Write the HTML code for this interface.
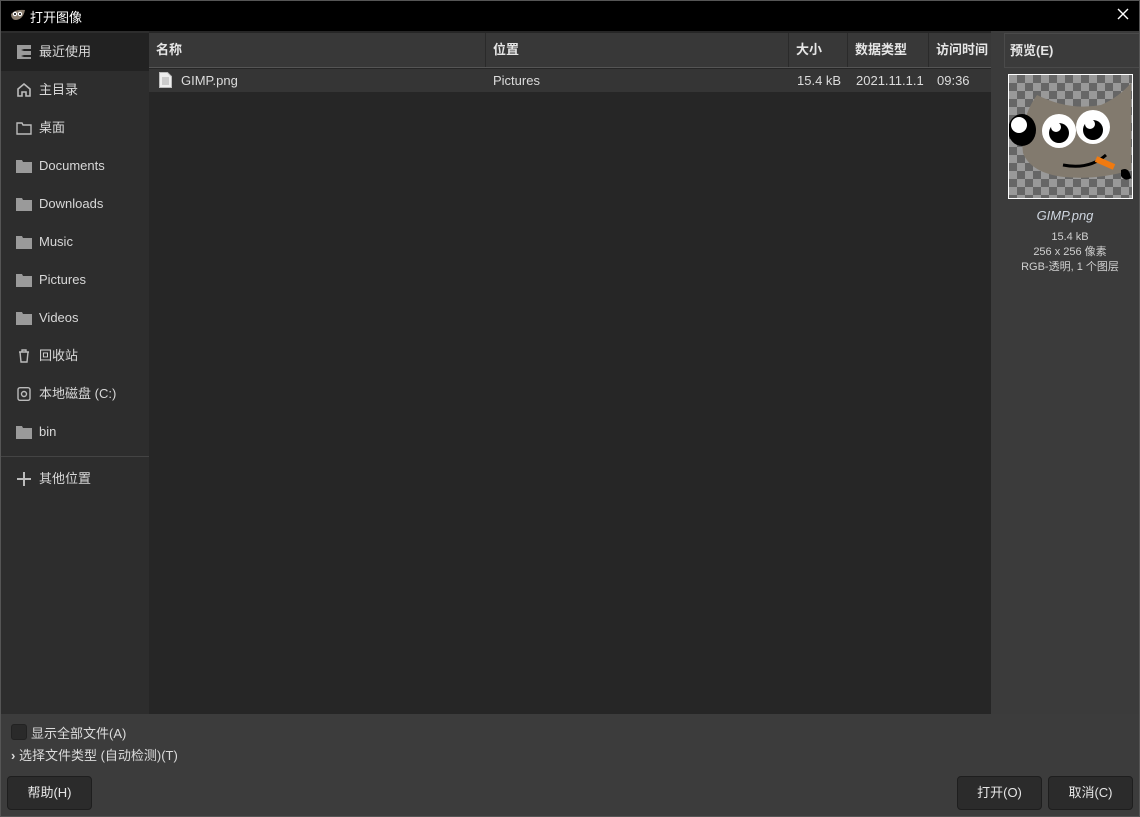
<!DOCTYPE html>
<html><head><meta charset="utf-8"><style>
*{margin:0;padding:0;box-sizing:border-box}
body{width:1140px;height:817px;background:#3c3c3c;font-family:"Liberation Sans","Noto Sans CJK SC",sans-serif;font-size:13px;color:#dcdcdc;position:relative;overflow:hidden}
.abs{position:absolute}
#frame{left:0;top:0;width:1140px;height:817px;border:1px solid #555}
#title{left:0;top:0;width:1140px;height:31px;background:#000;color:#fff;font-size:13px}
#side{left:1px;top:31px;width:148px;height:683px;background:#2d2d2d}
.it{position:absolute;left:0;width:148px;height:38px;line-height:38px;padding-left:38px;color:#d8d8d8}
.ic{position:absolute;left:15px;top:12px;width:16px;height:14px}
#main{left:149px;top:31px;width:842px;height:683px;background:#262626}
#hdr{left:149px;top:33px;width:842px;height:35px;background:#383838;border-bottom:1px solid #555}
.h{position:absolute;top:0;height:34px;line-height:34px;font-weight:bold;color:#e6e6e6;padding-left:7px;border-right:1px solid #2a2a2a}
#row{left:149px;top:69px;width:842px;height:23px;background:#353535}
.c{position:absolute;top:0;line-height:23px;color:#dcdcdc}
#prev{left:991px;top:31px;width:148px;height:683px;background:#3b3b3b}
#bottom{left:1px;top:714px;width:1138px;height:102px;background:#3c3c3c}
.btn{position:absolute;height:34px;border:1px solid #1e1e1e;border-radius:4px;background:#2b2b2b;color:#e6e6e6;text-align:center;line-height:32px}
</style></head><body>
<div class="abs" id="title">
 <svg class="abs" style="left:9px;top:8px" width="18" height="14" viewBox="0 0 18 14"><path d="M2 6 Q6 1 16 2 Q14 12 6 12 Q2 11 2 6Z" fill="#8a7d6e"/><circle cx="6" cy="6" r="2.2" fill="#fff"/><circle cx="11" cy="6" r="2.2" fill="#fff"/><circle cx="6" cy="6" r="1" fill="#000"/><circle cx="11" cy="6" r="1" fill="#000"/></svg>
 <div class="abs" style="left:30px;top:7px">打开图像</div>
 <svg class="abs" style="left:1117px;top:8px" width="12" height="12" viewBox="0 0 12 12"><path d="M1 1L11 11M11 1L1 11" stroke="#fff" stroke-width="1.4"/></svg>
</div>
<div class="abs" id="side">
 <div class="it" style="top:2px;background:#222">最近使用<svg class="ic" viewBox="0 0 16 14"><path d="M1 0h14v4H5l3 1-3 1h10v4H5l3 1-3 1h10v2H1z" fill="#9a9a9a"/></svg></div>
 <div class="it" style="top:40px">主目录<svg class="ic" viewBox="0 0 16 14"><path d="M2 13V6l6-5 6 5v7H10V9H6v4z" fill="none" stroke="#bbb" stroke-width="1.6"/></svg></div>
 <div class="it" style="top:78px">桌面<svg class="ic" viewBox="0 0 16 14"><path d="M1 2h5l1 2h8v9H1z" fill="none" stroke="#bbb" stroke-width="1.4"/></svg></div>
 <div class="it" style="top:116px">Documents<svg class="ic" viewBox="0 0 16 14"><path d="M0 1h6l1 2h9v11H0z" fill="#9a9a9a"/></svg></div>
 <div class="it" style="top:154px">Downloads<svg class="ic" viewBox="0 0 16 14"><path d="M0 1h6l1 2h9v11H0z" fill="#9a9a9a"/></svg></div>
 <div class="it" style="top:192px">Music<svg class="ic" viewBox="0 0 16 14"><path d="M0 1h6l1 2h9v11H0z" fill="#9a9a9a"/></svg></div>
 <div class="it" style="top:230px">Pictures<svg class="ic" viewBox="0 0 16 14"><path d="M0 1h6l1 2h9v11H0z" fill="#9a9a9a"/></svg></div>
 <div class="it" style="top:268px">Videos<svg class="ic" viewBox="0 0 16 14"><path d="M0 1h6l1 2h9v11H0z" fill="#9a9a9a"/></svg></div>
 <div class="it" style="top:306px">回收站<svg class="ic" viewBox="0 0 16 14"><path d="M3 3h10M6 3V1h4v2M4 3l1 10h6l1-10" fill="none" stroke="#bbb" stroke-width="1.4"/></svg></div>
 <div class="it" style="top:344px">本地磁盘 (C:)<svg class="ic" viewBox="0 0 16 14"><rect x="2" y="0.7" width="12" height="12.6" rx="2" fill="none" stroke="#bbb" stroke-width="1.4"/><circle cx="8" cy="7" r="2.5" fill="none" stroke="#bbb" stroke-width="1.4"/></svg></div>
 <div class="it" style="top:382px">bin<svg class="ic" viewBox="0 0 16 14"><path d="M0 1h6l1 2h9v11H0z" fill="#9a9a9a"/></svg></div>
 <div class="abs" style="left:0;top:425px;width:148px;height:1px;background:#444"></div>
 <div class="it" style="top:429px">其他位置<svg class="ic" viewBox="0 0 16 14"><path d="M8 0v14M1 7h14" stroke="#bbb" stroke-width="2"/></svg></div>
</div>
<div class="abs" id="main"></div>
<div class="abs" id="hdr">
 <div class="h" style="left:0;width:337px">名称</div>
 <div class="h" style="left:337px;width:303px">位置</div>
 <div class="h" style="left:640px;width:59px">大小</div>
 <div class="h" style="left:699px;width:81px">数据类型</div>
 <div class="h" style="left:780px;width:62px;border-right:none">访问时间</div>
</div>
<div class="abs" id="row">
 <svg class="abs" style="left:10px;top:3px" width="13" height="16" viewBox="0 0 13 16"><path d="M0.5 0.5h8l4 4v11h-12z" fill="#eee" stroke="#bbb"/><path d="M3 6h7M3 8h7M3 10h7M3 12h7" stroke="#aaa"/></svg>
 <div class="c" style="left:32px">GIMP.png</div>
 <div class="c" style="left:344px">Pictures</div>
 <div class="c" style="left:648px">15.4 kB</div>
 <div class="c" style="left:707px">2021.11.1.1</div>
 <div class="c" style="left:788px">09:36</div>
</div>
<div class="abs" id="prev">
 <div class="abs" style="left:13px;top:2px;width:135px;height:35px;border:1px solid #4a4a4a;border-right:none;line-height:33px;padding-left:5px;font-weight:bold;color:#e6e6e6">预览(E)</div>
 <div class="abs" style="left:17px;top:43px;width:125px;height:125px;border:1px solid #fff;background-color:#999;background-image:linear-gradient(45deg,#666 25%,transparent 25%,transparent 75%,#666 75%),linear-gradient(45deg,#666 25%,transparent 25%,transparent 75%,#666 75%);background-size:16px 16px;background-position:0 0,8px 8px;overflow:hidden">
  <svg width="123" height="123" viewBox="0 0 123 123"><path d="M28 20 Q60 36 92 30 Q110 22 122 8 L122 95 Q90 105 55 102 Q22 98 14 78 Q10 45 28 20Z" fill="#827a6e"/><ellipse cx="13" cy="55" rx="14" ry="16" fill="#000"/><circle cx="10" cy="50" r="8" fill="#fff"/><circle cx="50" cy="56" r="17" fill="#fff"/><circle cx="50" cy="58" r="10" fill="#000"/><circle cx="47" cy="52" r="5" fill="#fff"/><circle cx="84" cy="52" r="17" fill="#fff"/><circle cx="84" cy="55" r="10" fill="#000"/><circle cx="81" cy="49" r="5" fill="#fff"/><path d="M54 90 Q80 95 97 80" fill="none" stroke="#000" stroke-width="3"/><path d="M87 84l18 8" stroke="#f07a10" stroke-width="6"/><path d="M112 95 q8-4 10 8 q-6 4-10-2z" fill="#000"/></svg>
 </div>
 <div class="abs" style="left:0;width:148px;top:177px;text-align:center;font-style:italic;color:#cfd6e0">GIMP.png</div>
 <div class="abs" style="left:0;width:158px;top:199px;text-align:center;font-size:11px;line-height:15px;color:#d0d0d0">15.4 kB<br>256 x 256 像素<br>RGB-透明, 1 个图层</div>
</div>
<div class="abs" id="bottom">
 <div class="abs" style="left:10px;top:10px;width:16px;height:16px;border-radius:3px;background:#2a2a2a;border:1px solid #222"></div>
 <div class="abs" style="left:30px;top:9px">显示全部文件(A)</div>
 <div class="abs" style="left:10px;top:31px"><b>›</b> 选择文件类型 (自动检测)(T)</div>
 <div class="btn" style="left:6px;top:62px;width:85px">帮助(H)</div>
 <div class="btn" style="left:956px;top:62px;width:85px">打开(O)</div>
 <div class="btn" style="left:1047px;top:62px;width:85px">取消(C)</div>
</div>
<div class="abs" id="frame"></div>
</body></html>
